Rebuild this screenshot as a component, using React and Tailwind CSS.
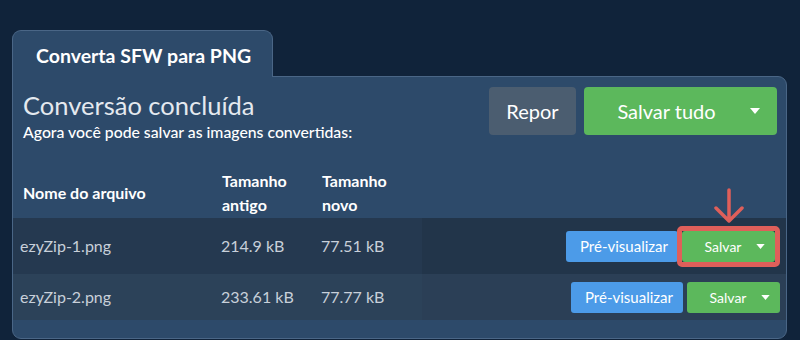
import React from 'react';

const Caret = ({ className }) => (
  <svg className={className} viewBox="0 0 10 6" fill="currentColor">
    <path d="M0 0h10L5 6z" />
  </svg>
);

const files = [
  { name: 'ezyZip-1.png', oldSize: '214.9 kB', newSize: '77.51 kB', highlight: true },
  { name: 'ezyZip-2.png', oldSize: '233.61 kB', newSize: '77.77 kB', highlight: false },
];

const SaveButton = () => (
  <div className="flex h-[31px] w-[93px] items-center rounded-[3px] bg-[#5cb85c] text-[14px] text-white">
    <span className="flex-1 pl-[20px] text-center">Salvar</span>
    <Caret className="mr-[10px] ml-[12px] h-[5px] w-[9px]" />
  </div>
);

const FileRow = ({ file, odd }) => {
  const cellBg = odd ? 'bg-[#253950]' : 'bg-[#2c4259]';
  const actBg = odd ? 'bg-[#22354a]' : 'bg-[#2b3f56]';
  return (
    <div className="grid grid-cols-[199px_100px_110px_1fr] text-[16px] text-[#c8d0da]">
      <div className={`flex items-center pl-[7px] ${cellBg}`}>{file.name}</div>
      <div className={`flex items-center pl-[9px] ${cellBg}`}>{file.oldSize}</div>
      <div className={`flex items-center pl-[9px] ${cellBg}`}>{file.newSize}</div>
      <div className={`flex items-center justify-end pt-[8px] pb-[7px] pr-[6px] ${actBg}`}>
        <button className="flex h-[31px] w-[112px] items-center justify-end rounded-[3px] bg-[#4c9be8] pr-[10px] text-[15px] text-white">
          Pré-visualizar
        </button>
        {file.highlight ? (
          <div className="relative -ml-px rounded-[5px] border-[5px] border-[#df5f5a]">
            <SaveButton />
            <svg
              className="absolute -top-[43px] left-1/2 h-[36px] w-[30px] -translate-x-1/2 text-[#df5f5a]"
              viewBox="0 0 30 36"
              fill="none"
              stroke="currentColor"
              strokeWidth="3.5"
              strokeLinecap="round"
              strokeLinejoin="round"
            >
              <path d="M15 2v31M2 20l13 13 13-13" />
            </svg>
          </div>
        ) : (
          <div className="ml-[4px]">
            <SaveButton />
          </div>
        )}
      </div>
    </div>
  );
};

export default function App() {
  return (
    <div className="min-h-screen bg-[#10233a] pt-[30px] pl-[12px] pr-[13px] font-['Lato',sans-serif]">
      <div className="relative z-10 -mb-px flex h-[47px] w-[261px] items-center rounded-t-[9px] border border-b-0 border-[#4a6686] bg-[#2d4a6a] pt-[3px] pl-[23px]">
        <h2 className="text-[19.5px] font-bold text-white">Converta SFW para PNG</h2>
      </div>
      <div className="rounded-tr-[9px] rounded-b-[9px] border border-[#4a6686] bg-[#2d4a6a] pb-[18px]">
        <div className="flex h-[83px] justify-between pt-[10px] pr-[9px] pl-[10px]">
          <div className="pt-[3px]">
            <h1 className="text-[25.5px] leading-[30px] text-[#e4e9ef]">Conversão concluída</h1>
            <p className="pt-[2px] text-[15.8px] font-medium leading-[20px] text-white">
              Agora você pode salvar as imagens convertidas:
            </p>
          </div>
          <div className="flex h-[48px] gap-[8px]">
            <button className="w-[87px] rounded-[4px] bg-[#4b5d70] text-[20px] text-white">Repor</button>
            <button className="flex w-[193px] items-center rounded-[4px] bg-[#5cb85c] text-[20px] text-white">
              <span className="flex-1 pl-[18px] text-center">Salvar tudo</span>
              <Caret className="mr-[16px] ml-[18px] h-[6px] w-[12px]" />
            </button>
          </div>
        </div>
        <div className="grid h-[58px] grid-cols-[199px_100px_110px_1fr] items-center pt-[8px] text-[16px] font-bold leading-[24px] text-white">
          <div className="pl-[10px]">Nome do arquivo</div>
          <div className="pl-[10px]">Tamanho<br />antigo</div>
          <div className="pl-[10px]">Tamanho<br />novo</div>
          <div />
        </div>
        {files.map((f, i) => (
          <FileRow key={f.name} file={f} odd={i % 2 === 0} />
        ))}
      </div>
    </div>
  );
}
